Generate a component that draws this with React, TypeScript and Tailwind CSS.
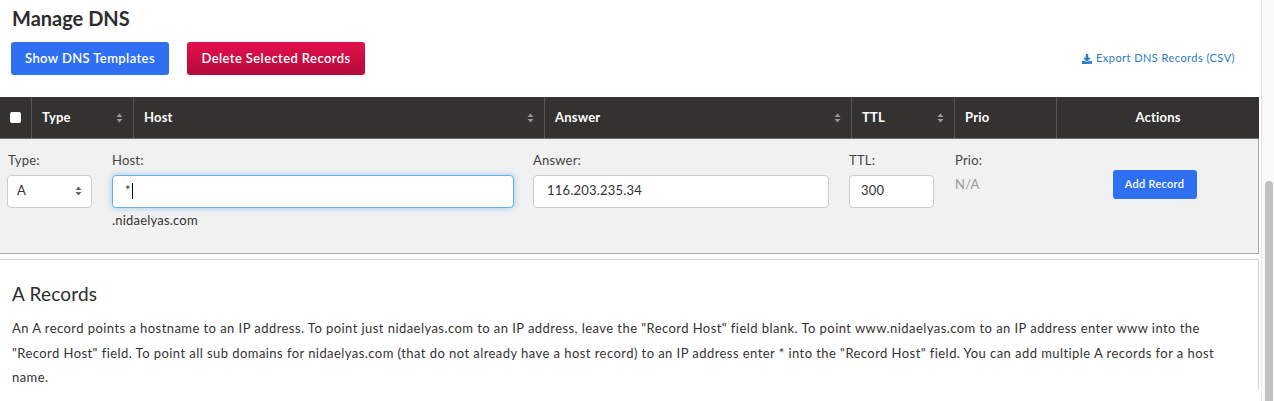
import { FaDownload } from 'react-icons/fa'

const font = { fontFamily: 'Lato, "Open Sans", sans-serif' }

function SortIcon({ color = '#9a9a9a' }: { color?: string }) {
  return (
    <svg width="7" height="10" viewBox="0 0 7 10" className="shrink-0">
      <path d="M3.5 0.5 L6.5 4 H0.5 Z" fill={color} />
      <path d="M3.5 9.5 L6.5 6 H0.5 Z" fill={color} />
    </svg>
  )
}

function HeadCell({ label, width, sort = true, center = false }: { label: string; width: string; sort?: boolean; center?: boolean }) {
  return (
    <div className={`${width} flex items-center border-l border-[#555] px-[10px] ${center ? 'justify-center' : 'justify-between'}`}>
      <span className="text-[13px] font-bold tracking-[0.2px] text-white">{label}</span>
      {sort && <SortIcon />}
    </div>
  )
}

export default function App() {
  return (
    <div className="flex h-[401px] w-[1274px] overflow-hidden bg-white text-[#333]" style={font}>
      <div className="w-[1261px]">
        <h1 className="px-[12px] pt-[5px] text-[20px] font-bold leading-[26px] text-[#2d2d2d]">Manage DNS</h1>

        <div className="mt-[11px] flex items-center pl-[11px] pr-[26px]">
          <button className="h-[33px] w-[158px] rounded-[3px] bg-[#2f70f2] text-[13px] font-semibold tracking-[0.4px] text-white">Show DNS Templates</button>
          <button className="ml-[18px] h-[33px] w-[178px] rounded-[3px] bg-gradient-to-b from-[#e3104b] to-[#b50a3c] text-[13px] font-semibold tracking-[0.4px] text-white">
            Delete Selected Records
          </button>
          <a className="ml-auto flex items-center gap-[4px] text-[11px] tracking-[0.45px] text-[#2b7bbf]">
            <FaDownload size={10} />
            Export DNS Records (CSV)
          </a>
        </div>

        <div className="mt-[22px] w-[1259px]">
          <div className="flex h-[42px] border-b border-[#6a6a6a] bg-[#333231]">
            <div className="flex w-[31px] items-center justify-center">
              <span className="block h-[11px] w-[11px] rounded-[2px] bg-white" />
            </div>
            <HeadCell label="Type" width="w-[102px]" />
            <HeadCell label="Host" width="w-[411px]" />
            <HeadCell label="Answer" width="w-[307px]" />
            <HeadCell label="TTL" width="w-[103px]" />
            <HeadCell label="Prio" width="w-[102px]" sort={false} />
            <HeadCell label="Actions" width="flex-1" sort={false} center />
          </div>

          <div className="flex h-[115px] border-r border-b border-[#a9a9a9] bg-[#f1f1f1] text-[13px] tracking-[0.2px]">
            <div className="w-[105px] pl-[7px] pt-[12px]">
              <div className="pl-[1px] text-[#444]">Type:</div>
              <div className="mt-[4px] flex h-[33px] w-[85px] items-center justify-between rounded-[4px] border border-[#ccc] bg-white px-[9px]">
                <span>A</span>
                <SortIcon color="#666" />
              </div>
            </div>
            <div className="w-[421px] pl-[7px] pt-[12px]">
              <div className="text-[#444]">Host:</div>
              <div className="mt-[4px] flex h-[33px] w-[402px] items-center rounded-[4px] border border-[#66afe9] bg-white px-[12px] shadow-[0_0_6px_rgba(102,175,233,0.6)]">
                <span>*</span>
                <span className="ml-[1px] inline-block h-[16px] w-px bg-black" />
              </div>
              <div className="mt-[3px] text-[#333]">.nidaelyas.com</div>
            </div>
            <div className="w-[323px] pl-[7px] pt-[12px]">
              <div className="text-[#444]">Answer:</div>
              <div className="mt-[4px] flex h-[33px] w-[296px] items-center rounded-[4px] border border-[#ccc] bg-white px-[13px]">116.203.235.34</div>
            </div>
            <div className="w-[106px] pt-[12px]">
              <div className="text-[#444]">TTL:</div>
              <div className="mt-[4px] flex h-[33px] w-[85px] items-center rounded-[4px] border border-[#ccc] bg-white px-[11px]">300</div>
            </div>
            <div className="w-[100px] pt-[12px]">
              <div className="text-[#444]">Prio:</div>
              <div className="mt-[4px] text-[#999]">N/A</div>
            </div>
            <div className="flex flex-1 justify-center pt-[31px] pr-[4px]">
              <button className="h-[29px] w-[84px] rounded-[3px] bg-[#2f70f2] text-[11px] font-semibold tracking-[0.3px] text-white">Add Record</button>
            </div>
          </div>

          <div className="mt-[5px] border-t border-r border-[#d4d4d4] px-[12px] pt-[22px]">
            <h2 className="text-[19px] font-normal leading-[24px] tracking-[0.2px] text-[#2d2d2d]">A Records</h2>
            <p className="mt-[10px] text-[13px] leading-[24.5px] tracking-[0.44px] text-[#333]">
              An A record points a hostname to an IP address. To point just nidaelyas.com to an IP address, leave the "Record Host" field blank. To point www.nidaelyas.com to an IP address enter www into the "Record Host" field. To point all sub domains for nidaelyas.com (that do not already have a host record) to an IP address enter * into the "Record Host" field. You can add multiple A records for a host name.
            </p>
          </div>
        </div>
      </div>

      <div className="w-[13px] border-l border-[#e6e6e6] bg-[#f9f9f9] pl-[3px] pt-[181px]">
        <div className="h-[240px] w-[8px] rounded-full bg-[#c1c1c1]" />
      </div>
    </div>
  )
}
